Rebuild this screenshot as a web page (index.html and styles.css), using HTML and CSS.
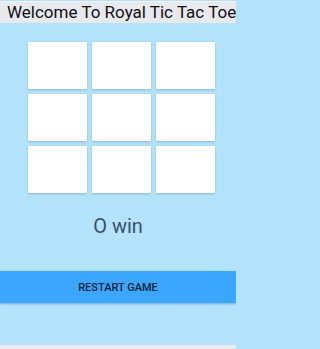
FILE: index.html
```html
<!DOCTYPE html>
<html>
<head>
<meta charset="utf-8">
<link rel="stylesheet" href="styles.css">
</head>
<body>
<div class="app">
  <div class="header">Welcome To Royal Tic Tac Toe</div>
  <div class="main">
    <div class="board">
      <div class="cell"></div><div class="cell"></div><div class="cell"></div>
      <div class="cell"></div><div class="cell"></div><div class="cell"></div>
      <div class="cell"></div><div class="cell"></div><div class="cell"></div>
    </div>
    <div class="status">O win</div>
    <button class="restart">RESTART GAME</button>
  </div>
  <div class="footer"></div>
</div>
</body>
</html>
```
FILE: styles.css
```css
html, body {
  margin: 0;
  padding: 0;
}
html {
  background: #b3e3fb;
}
body {
  width: 236px;
  height: 349px;
  overflow: hidden;
  font-family: Roboto, "Liberation Sans", sans-serif;
  background: #b3e3fb;
}
.app {
  display: flex;
  flex-direction: column;
  height: 349px;
}
.header {
  height: 22px;
  margin-top: 1px;
  background: #e8e8ef;
  border-top: 1px solid #f4f4f7;
  box-sizing: border-box;
  padding-left: 7px;
  font-size: 17px;
  line-height: 21px;
  color: #111;
  white-space: nowrap;
  overflow: hidden;
}
.main {
  flex: 1;
  background: #b3e3fb;
  display: flex;
  flex-direction: column;
  align-items: stretch;
}
.board {
  margin: 19px 0 0 28px;
  display: grid;
  grid-template-columns: repeat(3, 59px);
  grid-auto-rows: 47px;
  gap: 5px;
}
.cell {
  background: #ffffff;
  box-shadow: 0 1px 2px rgba(60, 110, 140, 0.35);
}
.status {
  margin-top: 21px;
  text-align: center;
  font-size: 20px;
  line-height: 24px;
  color: #3b5068;
}
.restart {
  margin-top: 33px;
  height: 32px;
  border: none;
  background: #3aa6fe;
  box-shadow: 0 1px 2px rgba(20, 90, 160, 0.4);
  font-family: Roboto, "Liberation Sans", sans-serif;
  font-weight: 500;
  font-size: 11px;
  color: #172238;
  padding: 0;
}
.footer {
  height: 4px;
  background: #ececf0;
}
```
